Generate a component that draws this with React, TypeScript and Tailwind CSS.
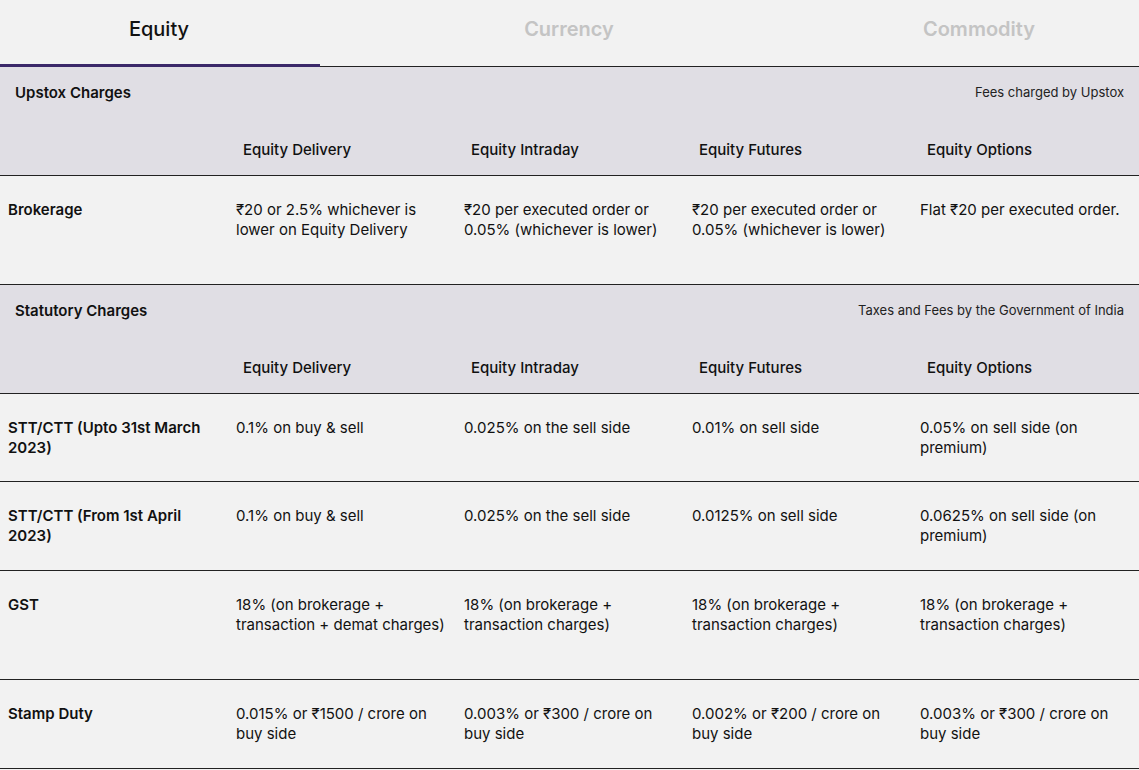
const cols = ['Equity Delivery', 'Equity Intraday', 'Equity Futures', 'Equity Options'];

const Section = ({ title, note }: { title: string; note: string }) => (
  <div className="bg-[#e0dee4] border-b border-[#222]">
    <div className="flex justify-between items-center px-[15px] h-[52px]">
      <span className="text-[15px] font-semibold">{title}</span>
      <span className="text-[13px] text-[#222]">{note}</span>
    </div>
    <div className="grid grid-cols-[236px_228px_228px_228px_1fr] h-[56px] items-start pt-[20px]">
      <div />
      {cols.map((c) => (
        <div key={c} className="pl-[7px] text-[15px] font-medium">{c}</div>
      ))}
    </div>
  </div>
);

const Row = ({ label, cells, h }: { label: string; cells: string[]; h: string }) => (
  <div className={`grid grid-cols-[236px_228px_228px_228px_1fr] border-b border-[#222] pt-[24px] text-[15px] leading-[20px] ${h}`}>
    <div className="pl-[8px] pr-[14px] font-semibold">{label}</div>
    {cells.map((c, i) => (
      <div key={i} className="pr-[16px]">{c}</div>
    ))}
  </div>
);

export default function App() {
  return (
    <div className="w-[1139px] min-h-[770px] bg-[#f2f2f2] text-[#111] font-[Inter,sans-serif]">
      <div className="border-b border-[#222] relative">
        <div className="absolute left-0 bottom-[-1px] w-[320px] h-[3px] bg-[#3b2869]" />
        <div className="grid grid-cols-[318px_46px_410px_410px] h-[66px] items-start pt-[14px] text-[20px] font-semibold">
          <div className="text-center font-medium text-[#111]">Equity</div>
          <div />
          <div className="text-center text-[#c4c4c4]">Currency</div>
          <div className="text-center text-[#c4c4c4]">Commodity</div>
        </div>
      </div>
      <Section title="Upstox Charges" note="Fees charged by Upstox" />
      <Row
        h="h-[109px]"
        label="Brokerage"
        cells={[
          '₹20 or 2.5% whichever is lower on Equity Delivery',
          '₹20 per executed order or 0.05% (whichever is lower)',
          '₹20 per executed order or 0.05% (whichever is lower)',
          'Flat ₹20 per executed order.',
        ]}
      />
      <Section title="Statutory Charges" note="Taxes and Fees by the Government of India" />
      <Row
        h="h-[88px]"
        label="STT/CTT (Upto 31st March 2023)"
        cells={['0.1% on buy & sell', '0.025% on the sell side', '0.01% on sell side', '0.05% on sell side (on premium)']}
      />
      <Row
        h="h-[89px]"
        label="STT/CTT (From 1st April 2023)"
        cells={['0.1% on buy & sell', '0.025% on the sell side', '0.0125% on sell side', '0.0625% on sell side (on premium)']}
      />
      <Row
        h="h-[109px]"
        label="GST"
        cells={[
          '18% (on brokerage + transaction + demat charges)',
          '18% (on brokerage + transaction charges)',
          '18% (on brokerage + transaction charges)',
          '18% (on brokerage + transaction charges)',
        ]}
      />
      <Row
        h="h-[89px]"
        label="Stamp Duty"
        cells={[
          '0.015% or ₹1500 / crore on buy side',
          '0.003% or ₹300 / crore on buy side',
          '0.002% or ₹200 / crore on buy side',
          '0.003% or ₹300 / crore on buy side',
        ]}
      />
    </div>
  );
}
